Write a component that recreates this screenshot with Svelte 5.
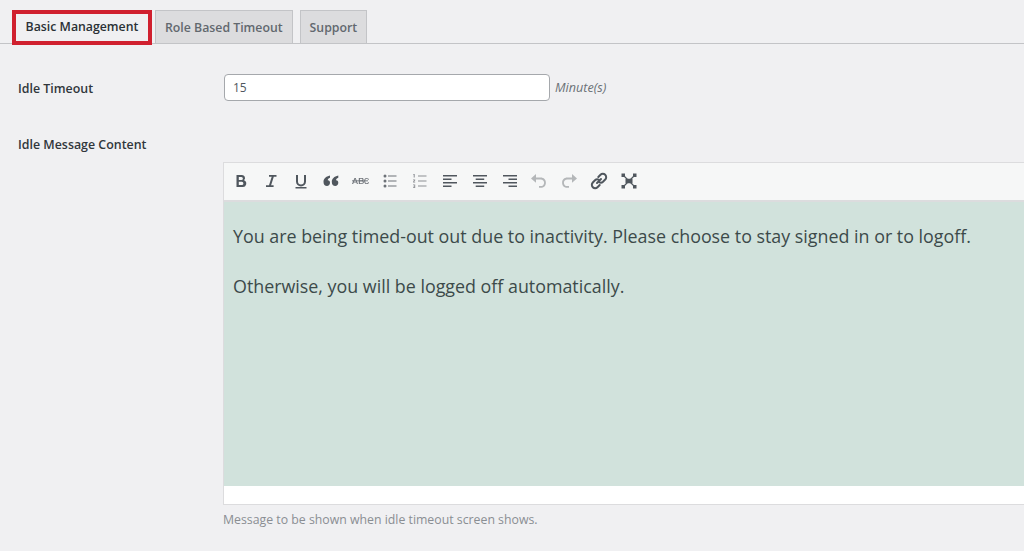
<script lang="ts">
  const message = [
    'You are being timed-out out due to inactivity. Please choose to stay signed in or to logoff.',
    'Otherwise, you will be logged off automatically.'
  ];
</script>

<div class="page">
  <nav class="tabs">
    <span class="tab active">Basic Management</span>
    <span class="tab">Role Based Timeout</span>
    <span class="tab">Support</span>
  </nav>

  <div class="row first">
    <div class="label">Idle Timeout</div>
    <div class="field">
      <input class="text" type="text" value="15" />
      <em class="unit">Minute(s)</em>
    </div>
  </div>

  <div class="row second">
    <div class="label">Idle Message Content</div>
    <div class="control">
      <div class="editor">
        <div class="toolbar">
          <button aria-label="Bold">
            <svg viewBox="0 0 20 20"><path d="M5.500 4h5.300a3.100 3.100 0 0 1 2.300 5.300A3.500 3.500 0 0 1 11.300 16H5.500zM7.800 6v3h2.600a1.500 1.500 0 0 0 0-3zM7.800 10.800V14h3a1.600 1.600 0 0 0 0-3.200z" fill-rule="evenodd"/></svg>
          </button>
          <button aria-label="Italic">
            <svg viewBox="0 0 20 20"><path d="M8 4h7.500v1.700h-2.700l-2.700 8.600h2.500V16H5v-1.700h3l2.700-8.600H8z"/></svg>
          </button>
          <button aria-label="Underline">
            <svg viewBox="0 0 20 20"><path d="M5 4h2v6.500a3 3 0 0 0 6 0V4h2v6.500a5 5 0 0 1-10 0zM4.500 16h11v1.500h-11z"/></svg>
          </button>
          <button aria-label="Quote">
            <svg viewBox="0 0 20 20"><path d="M9 4.500v2.200C7.500 7.300 6.800 8.100 6.700 9.300 8.200 9.200 9 10.200 9 11.800 9 13.800 7.700 15 6 15 3.900 15 2.500 13.400 2.500 11 2.500 7.900 4.800 5.300 9 4.500zM17.300 4.500v2.200c-1.500.6-2.200 1.400-2.300 2.600 1.500-.1 2.300.9 2.300 2.500 0 2-1.300 3.200-3 3.200-2.100 0-3.500-1.600-3.500-4 0-3.100 2.300-5.700 6.500-6.500z"/></svg>
          </button>
          <button aria-label="Strikethrough" class="soft">
            <svg viewBox="0 0 20 20"><path d="M2 9.400h16v.9H2z"/><path d="M2 13 4.500 7h1.200L8 13H6.900l-.5-1.400H3.700L3.200 13zM4 10.800h2.100l-1-2.800zM8.800 7h3c1.200 0 1.800.5 1.800 1.500 0 .6-.3 1-.8 1.200.7.200 1.100.6 1.100 1.300 0 1.300-.8 2-2.100 2h-3zM9.900 7.800v1.600h1.700c.6 0 .9-.3.900-.8s-.3-.8-.9-.8zM9.900 10.200v2h1.900c.6 0 1-.3 1-1s-.4-1-1-1zM19 11.200c-.2 1.200-1 1.900-2.300 1.900-1.600 0-2.500-1.100-2.500-3.100s.9-3.100 2.500-3.100c1.300 0 2.100.7 2.300 1.900h-1c-.1-.6-.6-1.100-1.300-1.100-1 0-1.500.8-1.500 2.300s.5 2.300 1.500 2.300c.7 0 1.200-.5 1.300-1.100z"/></svg>
          </button>
          <button aria-label="Bullet list" class="soft">
            <svg viewBox="0 0 20 20"><circle cx="5" cy="5" r="1.500"/><circle cx="5" cy="10" r="1.500"/><circle cx="5" cy="15" r="1.500"/><path d="M8 4.500h8.500v1H8zM8 9.500h8.500v1H8zM8 14.500h8.500v1H8z"/></svg>
          </button>
          <button aria-label="Numbered list" class="off-dark">
            <svg viewBox="0 0 20 20"><path d="M3.500 3h1.200v3.500h-1V4h-.5zM3 8.500h2.200v.9L4 10.700h1.200v.8H3v-.8l1.300-1.400H3zM3 13.500h2.200v3.500H3v-.8h1.300v-.6h-.9v-.7h.9v-.6H3z"/><path d="M8 4.500h8.500v1H8zM8 9.500h8.500v1H8zM8 14.500h8.500v1H8z"/></svg>
          </button>
          <button aria-label="Align left">
            <svg viewBox="0 0 20 20"><path d="M3 4h14v1.500H3zM3 7.500h8.500V9H3zM3 11h14v1.500H3zM3 14.500h8.500V16H3z"/></svg>
          </button>
          <button aria-label="Align center">
            <svg viewBox="0 0 20 20"><path d="M3 4h14v1.500H3zM5.700 7.500h8.500V9H5.700zM3 11h14v1.500H3zM5.700 14.500h8.500V16H5.700z"/></svg>
          </button>
          <button aria-label="Align right">
            <svg viewBox="0 0 20 20"><path d="M3 4h14v1.500H3zM8.500 7.500H17V9H8.500zM3 11h14v1.500H3zM8.500 14.500H17V16H8.500z"/></svg>
          </button>
          <button aria-label="Undo" class="off">
            <svg viewBox="0 0 20 20"><path d="M7 3 2 7.400 7 11.800V8.400h4.600c2.200 0 3.500 1.400 3.500 3.300s-1.300 3.400-3.500 3.400H10v1.700h1.600c3.300 0 5.300-2.200 5.300-5.100s-2-5.100-5.300-5.100H7z"/></svg>
          </button>
          <button aria-label="Redo" class="off">
            <svg viewBox="0 0 20 20"><path d="M13 3 18 7.400 13 11.800V8.400H8.400c-2.200 0-3.500 1.400-3.500 3.300s1.300 3.400 3.500 3.400H10v1.700H8.400c-3.300 0-5.300-2.200-5.300-5.100s2-5.100 5.300-5.100H13z"/></svg>
          </button>
          <button aria-label="Link">
            <svg viewBox="0 0 20 20" class="outline"><path d="M8 12 12 8"/><path d="M9.300 6 11.500 3.800a3.200 3.200 0 0 1 4.700 4.700L14 10.700a3.200 3.200 0 0 1-3.900.4"/><path d="M10.700 14 8.500 16.200a3.200 3.200 0 0 1-4.700-4.700L6 9.300a3.200 3.200 0 0 1 3.900-.4"/></svg>
          </button>
          <button aria-label="Fullscreen">
            <svg viewBox="0 0 20 20"><path d="M3.500 3.500l13 13M16.500 3.500l-13 13" stroke="currentColor" stroke-width="1.200"/><path d="M2.500 2.500h3.500v3.500H2.500zM14 2.500h3.500v3.500H14zM2.500 14h3.500v3.500H2.500zM14 14h3.500v3.500H14zM6.500 7.800h7v4.400h-7z"/></svg>
          </button>
        </div>
        <div class="content">
          {#each message as line}
            <p>{line}</p>
          {/each}
        </div>
        <div class="status"></div>
      </div>
      <p class="hint">Message to be shown when idle timeout screen shows.</p>
    </div>
  </div>
</div>

<style>
  :global(body) {
    margin: 0;
    background: #f0f0f2;
    overflow: hidden;
  }
  .page {
    height: 551px;
    box-sizing: border-box;
    padding-top: 10px;
    font-family: 'Open Sans', 'Noto Sans', sans-serif;
    color: #3c434a;
  }
  .tabs {
    display: flex;
    align-items: flex-end;
    height: 33px;
    padding-left: 16px;
    gap: 7px;
    border-bottom: 1px solid #c3c4c7;
  }
  .tab {
    box-sizing: border-box;
    height: 34px;
    margin-bottom: -1px;
    padding: 0 9px;
    line-height: 33px;
    font-size: 12.3px;
    font-weight: 600;
    color: #62686e;
    background: #dcdcde;
    border: 1px solid #c3c4c7;
    white-space: nowrap;
  }
  .tab.active {
    width: 132px;
    height: 27px;
    margin-bottom: 2px;
    padding: 0;
    text-align: center;
    line-height: 26px;
    color: #2a3035;
    background: #f0f0f2;
    border: 0;
    outline: 4px solid #d0202f;
  }
  .row {
    display: flex;
  }
  .first {
    margin-top: 30px;
    height: 27px;
    align-items: center;
  }
  .second {
    margin-top: 34px;
  }
  .label {
    width: 223px;
    box-sizing: border-box;
    padding: 1px 0 0 18px;
    font-size: 12.4px;
    font-weight: 600;
    color: #31373c;
  }
  .second .label {
    padding-top: 0;
    line-height: 20px;
  }
  .field {
    display: flex;
    align-items: center;
    gap: 5px;
    margin-left: 1px;
  }
  .text {
    box-sizing: border-box;
    width: 326px;
    height: 27px;
    padding: 0 8px;
    font: 12px 'Open Sans', 'Noto Sans', sans-serif;
    color: #50575e;
    background: #fff;
    border: 1px solid #a5a8ac;
    border-radius: 4px;
  }
  .unit {
    font-size: 12.6px;
    color: #6b7076;
  }
  .control {
    flex: 1;
    min-width: 0;
    padding-top: 17px;
  }
  .editor {
    margin-top: 10px;
    border: 1px solid #dcdcde;
    border-right: 0;
    background: #fff;
  }
  .toolbar {
    display: flex;
    box-sizing: content-box;
    height: 35px;
    padding: 0 0 2px 4px;
    gap: 3.85px;
    align-items: center;
    background: #f6f7f7;
    border-bottom: 2px solid #dcdcde;
  }
  .toolbar button {
    display: flex;
    width: 26px;
    height: 26px;
    padding: 0;
    align-items: center;
    justify-content: center;
    background: none;
    border: 0;
    color: #50575e;
  }
  .toolbar svg {
    width: 20px;
    height: 20px;
    fill: currentColor;
  }
  .toolbar svg.outline {
    fill: none;
    stroke: currentColor;
    stroke-width: 2;
    stroke-linecap: round;
  }
  .toolbar .soft {
    color: #6d7278;
  }
  .toolbar .off-dark {
    color: #8c8f94;
  }
  .toolbar .off {
    color: #b4b7b9;
  }
  .content {
    box-sizing: border-box;
    height: 284px;
    padding: 21px 9px 0;
    background: #d1e2dc;
    font-size: 17.85px;
    line-height: 26px;
    color: #3c4a4a;
  }
  .content p {
    margin: 0 0 24px;
    white-space: nowrap;
  }
  .status {
    height: 18px;
  }
  .hint {
    margin: 6px 0 0;
    font-size: 12.3px;
    color: #8a8e93;
  }
</style>
